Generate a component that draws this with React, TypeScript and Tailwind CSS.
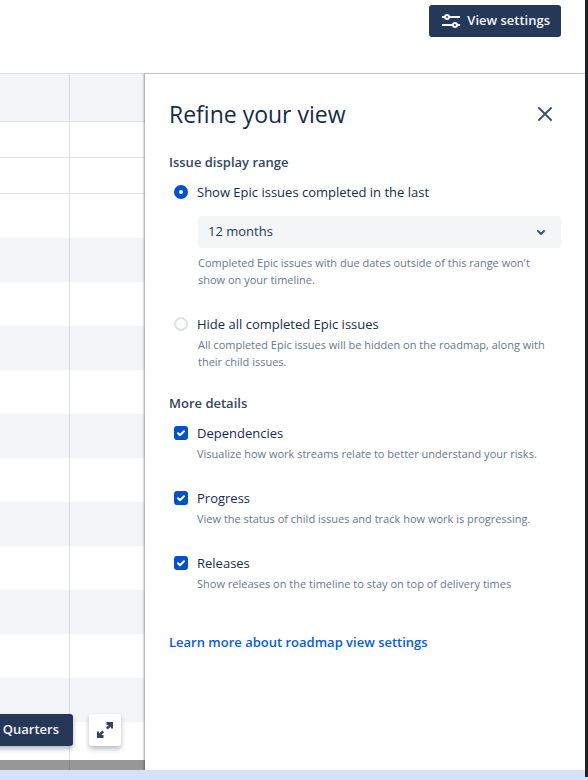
import { useState } from "react";

interface DetailOption {
  id: string;
  label: string;
  description: string;
}

const detailOptions: DetailOption[] = [
  {
    id: "dependencies",
    label: "Dependencies",
    description: "Visualize how work streams relate to better understand your risks.",
  },
  {
    id: "progress",
    label: "Progress",
    description: "View the status of child issues and track how work is progressing.",
  },
  {
    id: "releases",
    label: "Releases",
    description: "Show releases on the timeline to stay on top of delivery times",
  },
];

const timelineRows = [
  "h-12 border-b bg-[#f4f5f7]",
  "h-9 border-b bg-white",
  "h-9 border-b bg-white",
  ...Array.from({ length: 12 }, (_, i) => (i % 2 ? "h-11 bg-[#f4f5f7]" : "h-11 bg-white")),
  "grow bg-white",
  "h-[10px] bg-[#979797]",
];

const SettingsIcon = () => (
  <svg width="18" height="14" viewBox="0 0 18 14" fill="none" stroke="currentColor" strokeWidth="2" aria-hidden="true">
    <path d="M0 3h3M7 3h11M0 11h11M15 11h3" />
    <circle cx="5" cy="3" r="2" />
    <circle cx="13" cy="11" r="2" />
  </svg>
);

const ExpandIcon = () => (
  <svg width="16" height="16" viewBox="0 0 16 16" fill="currentColor" aria-hidden="true">
    <path d="M9.500 0H16v6.500h-2V4.400L10.700 7.600 8.900 5.800 11.700 3H9.500zM6.500 16H0V9.500h2v2.100L5.300 8.400l1.800 1.800L4.300 13h2.200z" />
  </svg>
);

const Timeline = () => (
  <div className="relative flex min-w-0 flex-1 flex-col border-t border-[#dfe1e6]">
    {timelineRows.map((row, index) => (
      <div key={index} className={`flex shrink-0 border-[#dfe1e6] ${row}`}>
        <div className="w-[70px] border-r border-[#091e42]/13" />
        <div className="flex-1" />
      </div>
    ))}

    {/* Floating controls */}
    <div className="absolute right-6 bottom-6 flex gap-4">
      <button type="button" className="h-8 rounded-[3px] bg-[#253858] px-[14px] text-[13px] font-semibold text-[#f4f5f7] shadow-[0_3px_5px_rgba(9,30,66,0.3)]">
        Quarters
      </button>
      <button type="button" aria-label="Full screen" className="flex size-8 items-center justify-center rounded-[3px] bg-white text-[#344563] shadow-[0_3px_5px_rgba(9,30,66,0.3)]">
        <ExpandIcon />
      </button>
    </div>
  </div>
);

interface RangeRadioProps {
  id: string;
  label: string;
  checked: boolean;
  onChange: () => void;
}

const RangeRadio = ({ id, label, checked, onChange }: RangeRadioProps) => (
  <div className="flex h-5 items-center gap-[9px] pl-[5px]">
    <input
      type="radio"
      name="range"
      id={id}
      checked={checked}
      onChange={onChange}
      className="size-[14px] shrink-0 appearance-none rounded-full border-2 border-[#dfe1e6] bg-[#fafbfc] checked:border-[5px] checked:border-[#0052cc] checked:bg-white"
    />
    <label htmlFor={id} className="text-[13px] leading-5 text-[#172b4d]">{label}</label>
  </div>
);

const App = () => {
  const [range, setRange] = useState("show");
  const [months, setMonths] = useState("12");
  const [details, setDetails] = useState<string[]>(detailOptions.map((option) => option.id));

  const toggleDetail = (id: string) =>
    setDetails((current) => (current.includes(id) ? current.filter((item) => item !== id) : [...current, id]));

  return (
    <div className="flex min-h-screen flex-col bg-[#d5e1f8] font-['Open_Sans','Segoe_UI',sans-serif]">
      <div className="flex flex-1">
        <div className="mb-[10px] flex min-w-0 flex-1 flex-col bg-white">
          <header className="flex h-[73px] items-start justify-end pt-[5px] pr-6">
            <button type="button" className="flex h-8 items-center gap-[7px] rounded-[3px] bg-[#253858] pr-[11px] pl-[13px] text-[13px] font-semibold text-[#f4f5f7]">
              <SettingsIcon />
              View settings
            </button>
          </header>

          <main className="flex flex-1 overflow-hidden">
            <Timeline />

            <aside className="relative w-[440px] shrink-0 border-t border-[#c1c4cc] bg-white px-6 pt-6 shadow-[0_0_3px_rgba(0,0,0,0.7)]">
              <div className="flex h-8 items-center justify-between">
                <h1 className="text-[23px] font-medium text-[#172b4d]">Refine your view</h1>
                <button type="button" aria-label="Close" className="flex size-8 items-center justify-center text-[#42526e]">
                  <svg width="16" height="16" viewBox="0 0 16 16" stroke="currentColor" strokeWidth="2" strokeLinecap="round" aria-hidden="true">
                    <path d="M2 2l12 12M14 2L2 14" />
                  </svg>
                </button>
              </div>

              {/* Display range */}
              <h2 className="mt-[22px] mb-[10px] text-[13px] leading-5 font-semibold text-[#344563]">Issue display range</h2>
              <RangeRadio id="show" label="Show Epic issues completed in the last" checked={range === "show"} onChange={() => setRange("show")} />
              <div className="relative mt-[14px] ml-[29px]">
                <select
                  aria-label="Completed in the last"
                  value={months}
                  onChange={(event) => setMonths(event.target.value)}
                  className="h-8 w-full appearance-none rounded-[3px] bg-[#f4f5f7] px-[10px] text-[13px] text-[#253858]"
                >
                  <option value="12">12 months</option>
                </select>
                <svg className="pointer-events-none absolute top-3 right-4" width="8" height="8" viewBox="0 0 8 8" fill="none" stroke="#42526e" strokeWidth="2" strokeLinecap="round" strokeLinejoin="round" aria-hidden="true">
                  <path d="M1 3l3 3 3-3" />
                </svg>
              </div>
              <p className="mt-[6px] mb-[26px] ml-[29px] pr-2 text-[11px] leading-[17px] text-[#6b778c]">
                Completed Epic issues with due dates outside of this range won't show on your timeline.
              </p>
              <RangeRadio id="hide" label="Hide all completed Epic issues" checked={range === "hide"} onChange={() => setRange("hide")} />
              <p className="mt-[2px] ml-[29px] pr-2 text-[11px] leading-[17px] text-[#6b778c]">
                All completed Epic issues will be hidden on the roadmap, along with their child issues.
              </p>

              {/* More details */}
              <h2 className="mt-[23px] mb-[10px] text-[13px] leading-5 font-semibold text-[#344563]">More details</h2>
              <div className="flex flex-col gap-[26px]">
                {detailOptions.map((option) => (
                  <div key={option.id}>
                    <div className="flex h-5 items-center gap-[9px] pl-[5px]">
                      <div className="relative size-[14px] shrink-0">
                        <input
                          type="checkbox"
                          id={option.id}
                          checked={details.includes(option.id)}
                          onChange={() => toggleDetail(option.id)}
                          className="block size-[14px] appearance-none rounded-[3px] border-2 border-[#dfe1e6] bg-[#fafbfc] checked:border-[#0052cc] checked:bg-[#0052cc]"
                        />
                        <svg className="pointer-events-none absolute inset-0" width="14" height="14" viewBox="0 0 14 14" fill="none" stroke="white" strokeWidth="2" strokeLinecap="round" strokeLinejoin="round" aria-hidden="true">
                          <path d="M4 7.200l2 2 4-4" />
                        </svg>
                      </div>
                      <label htmlFor={option.id} className="text-[13px] leading-5 text-[#172b4d]">{option.label}</label>
                    </div>
                    <p className="mt-[2px] ml-7 text-[11px] leading-[17px] text-[#6b778c]">{option.description}</p>
                  </div>
                ))}
              </div>

              <a href="#" className="mt-10 inline-block text-[13px] leading-5 font-semibold text-[#0c5bd8]">
                Learn more about roadmap view settings
              </a>
            </aside>
          </main>
        </div>
        <div className="mb-[3px] w-[3px] bg-[#202124]" />
      </div>
    </div>
  );
};

export default App;
